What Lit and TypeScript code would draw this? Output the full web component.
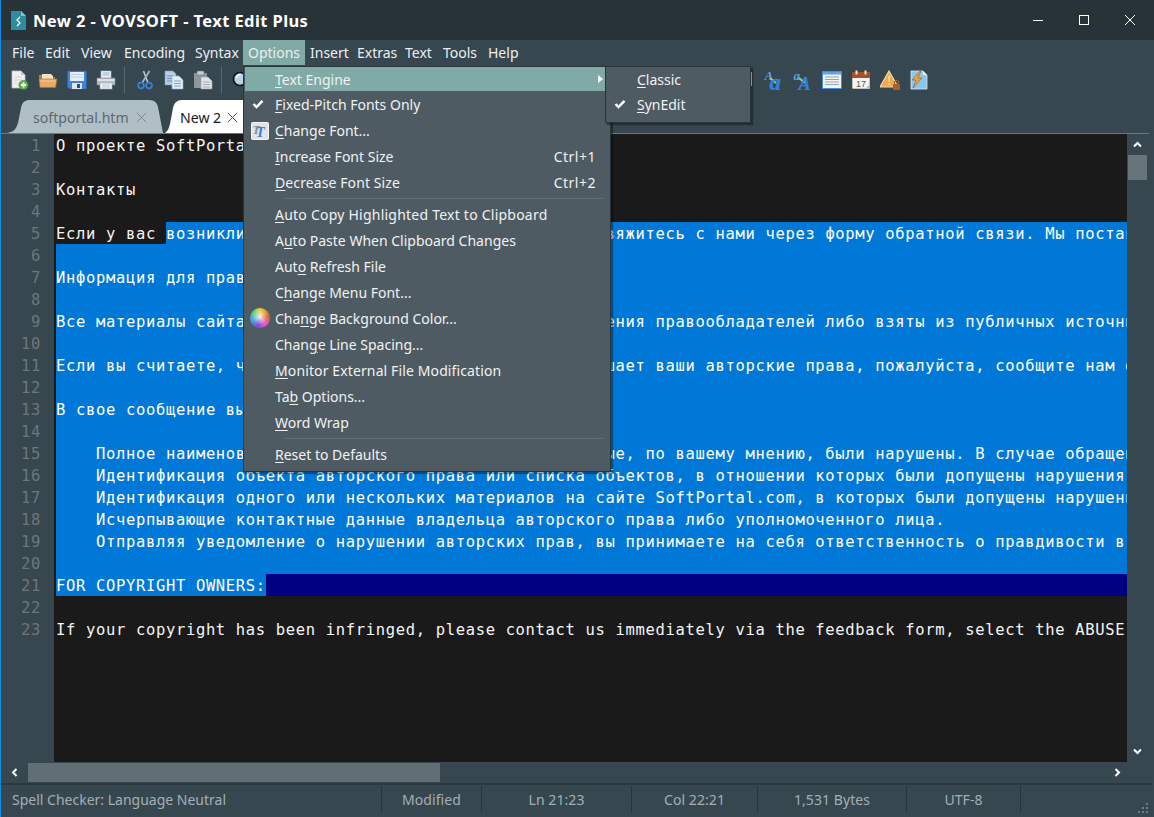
import { LitElement, html, css } from "lit";
import { customElement } from "lit/decorators.js";

type Seg = { t: string; sel?: boolean; fill?: boolean };
type Line = { segs?: Seg[]; t?: string; sel?: boolean; cur?: boolean };

const lines: Line[] = [
  { t: "О проекте SoftPortal" },
  { t: "" },
  { t: "Контакты" },
  { t: "" },
  { segs: [{ t: "Если у вас " }, { t: "возникли вопросы или пожелания, пожалуйста свяжитесь с нами через форму обратной связи. Мы поставим", sel: true, fill: true }] },
  { t: "", sel: true },
  { t: "Информация для правообладателей", sel: true },
  { t: "", sel: true },
  { t: "Все материалы сайта опубликованы на нём только с разрешения правообладателей либо взяты из публичных источников", sel: true },
  { t: "", sel: true },
  { t: "Если вы считаете, что какой-либо материал на сайте нарушает ваши авторские права, пожалуйста, сообщите нам об этом", sel: true },
  { t: "", sel: true },
  { t: "В свое сообщение вы должны включить следующие сведения:", sel: true },
  { t: "", sel: true },
  { t: "    Полное наименование объекта и авторских прав, которые, по вашему мнению, были нарушены. В случае обращения", sel: true },
  { t: "    Идентификация объекта авторского права или списка объектов, в отношении которых были допущены нарушения", sel: true },
  { t: "    Идентификация одного или нескольких материалов на сайте SoftPortal.com, в которых были допущены нарушения", sel: true },
  { t: "    Исчерпывающие контактные данные владельца авторского права либо уполномоченного лица.", sel: true },
  { t: "    Отправляя уведомление о нарушении авторских прав, вы принимаете на себя ответственность о правдивости в своём", sel: true },
  { t: "", sel: true },
  { segs: [{ t: "FOR COPYRIGHT OWNERS:", sel: true }], cur: true },
  { t: "" },
  { t: "If your copyright has been infringed, please contact us immediately via the feedback form, select the ABUSE category" },
];

type Row = { label?: string; key?: string; check?: boolean; icon?: string; sep?: boolean; hot?: boolean; arrow?: boolean; ls?: number };
const rows: Row[] = [
  { label: "&Text Engine", hot: true, arrow: true },
  { label: "&Fixed-Pitch Fonts Only", check: true },
  { label: "&Change Font...", icon: "font" },
  { label: "&Increase Font Size", key: "Ctrl+1" },
  { label: "&Decrease Font Size", key: "Ctrl+2", ls: 0.1 },
  { sep: true },
  { label: "&Auto Copy Highlighted Text to Clipboard", ls: 0.23 },
  { label: "A&uto Paste When Clipboard Changes" },
  { label: "Aut&o Refresh File" },
  { label: "C&hange Menu Font..." },
  { label: "Cha&nge Background Color...", icon: "color" },
  { label: "Chan&ge Line Spacing..." },
  { label: "&Monitor External File Modification", ls: 0.12 },
  { label: "Ta&b Options..." },
  { label: "&Word Wrap" },
  { sep: true },
  { label: "&Reset to Defaults" },
];
const subRows: Row[] = [{ label: "&Classic" }, { label: "&SynEdit", check: true }];

const menus: [string, number][] = [["File", 33], ["Edit", 36], ["View", 43], ["Encoding", 71], ["Syntax", 53], ["Options", 62], ["Insert", 47], ["Extras", 48], ["Text", 38], ["Tools", 45], ["Help", 41]];
const status = ["Modified", "Ln 21:23", "Col 22:21", "1,531 Bytes", "UTF-8"];

const mn = (s: string) => {
  const i = s.indexOf("&");
  return html`${s.slice(0, i)}<u>${s[i + 1]}</u>${s.slice(i + 2)}`;
};

const check = html`<svg class="check" width="12" height="10" viewBox="0 0 12 10"><path d="M1.5 5 L4.5 8 L10.5 1.8" fill="none" stroke="#fff" stroke-width="2.4"/></svg>`;

const iconNew = html`<svg class="ti" viewBox="0 0 20 20"><path d="M3 1h9l4 4v13H3z" fill="#eef0f1" stroke="#c4c8ca" stroke-width=".8"/><path d="M12 1v4h4z" fill="#bfc5c9"/><path d="M5 7h8M5 10h8M5 13h5" stroke="#d2d6d8"/><circle cx="14.5" cy="15" r="4.6" fill="#5cb54a" stroke="#3f8a32" stroke-width=".6"/><path d="M14.5 12.4v5.2M11.9 15h5.2" stroke="#fff" stroke-width="1.8"/></svg>`;
const iconOpen = html`<svg class="ti" viewBox="0 0 20 20"><path d="M1 5h6l2 2h8v3H1z" fill="#b9793a"/><path d="M4 4h9l2 2v3H4z" fill="#f3e1c3"/><path d="M1 9h18l-1.5 8.5H2z" fill="#e8a866" stroke="#a86f38" stroke-width=".6"/><path d="M2.5 11h15" stroke="#f5cb99"/></svg>`;
const iconSave = html`<svg class="ti" viewBox="0 0 20 20"><path d="M.5 1h19v18H3l-2.500-2z" fill="#3f84d6" stroke="#2a62ab" stroke-width=".6"/><rect x="3" y="2" width="14" height="9" fill="#e6eef6"/><path d="M4 4.500h12M4 7h12" stroke="#b9cde2"/><rect x="5" y="13" width="10" height="6" fill="#dfe6ee"/><rect x="10" y="14" width="3" height="4" fill="#33507a"/></svg>`;
const iconPrint = html`<svg class="ti" viewBox="0 0 20 20"><rect x="5" y="1" width="10" height="7" fill="#f2f5f7" stroke="#b3bbc0" stroke-width=".6"/><path d="M6.500 3h7M6.500 5h7" stroke="#7fb4de"/><path d="M1 8h18v7H1z" fill="#b7bec3" stroke="#84898e" stroke-width=".6"/><rect x="1.500" y="9" width="17" height="2" fill="#dde1e3"/><rect x="4" y="13" width="12" height="6" fill="#f4f6f7" stroke="#a7adb1" stroke-width=".6"/><path d="M6 15h8M6 17h8" stroke="#a9c8df"/></svg>`;
const iconCut = html`<svg class="ti" viewBox="0 0 20 20"><path d="M14.500 1 L7 13M8.500 1 L13 13" stroke="#c3ccd3" stroke-width="1.500" fill="none"/><path d="M14.500 1 L7.500 12" stroke="#8aa7c5" stroke-width="1"/><circle cx="6" cy="15.500" r="2.900" fill="none" stroke="#3a80d4" stroke-width="1.800"/><circle cx="14" cy="15.500" r="2.900" fill="none" stroke="#3a80d4" stroke-width="1.800"/></svg>`;
const iconCopy = html`<svg class="ti" viewBox="0 0 20 20"><path d="M1 1h8l3 3v11H1z" fill="#b6cde2" stroke="#7f9fbf" stroke-width=".6"/><path d="M3 6h6M3 8.500h6M3 11h6" stroke="#6f93b8"/><path d="M8 6h7l4 4v9H8z" fill="#e3edf6" stroke="#8fb0cf" stroke-width=".6"/><path d="M10 11h7M10 13.500h7M10 16h7" stroke="#7da2c6"/></svg>`;
const iconPaste = html`<svg class="ti" viewBox="0 0 20 20"><rect x="1" y="3" width="13" height="15" rx="1" fill="#8f979c"/><rect x="4" y="1" width="7" height="4" rx="1" fill="#c9cdd0" stroke="#6f767b" stroke-width=".6"/><path d="M8 7h7l4 4v8H8z" fill="#dfe3e6" stroke="#99a1a6" stroke-width=".6"/><path d="M10 12h7M10 14.500h7M10 17h7" stroke="#a7aeb3"/></svg>`;
const iconSearch = html`<svg class="ti" viewBox="0 0 20 20"><circle cx="8" cy="9" r="6.500" fill="#b9d4ea" stroke="#111" stroke-width="1.600"/><path d="M4.500 8a4 4 0 0 1 4-3.500" stroke="#fff" stroke-width="1.500" fill="none"/><path d="M13 14l5 5" stroke="#222" stroke-width="3"/></svg>`;
const iconPart = html`<svg class="ti" viewBox="0 0 20 20"><rect x="3" y="2" width="14" height="14" fill="#d9dde0"/><path d="M13 4h3v14h-3z" fill="#aeb5ba"/></svg>`;
const iconAa = (a: string, b: string, sa: number, sb: number) => html`<svg class="ti" viewBox="0 0 20 20"><text x="0.500" y="10" font-family="Liberation Serif, serif" font-style="italic" font-weight="700" font-size="${sa}" fill="#5a9fe8">${a}</text><path d="M6 8l6 5" stroke="#93d56f" stroke-width="1.800"/><text x="5.500" y="19.500" font-family="Liberation Serif, serif" font-style="italic" font-weight="700" font-size="${sb}" fill="#2f82e0" stroke="#2f82e0" stroke-width=".3">${b}</text></svg>`;
const iconTable = html`<svg class="ti" viewBox="0 0 20 20"><rect x=".5" y="1.500" width="19" height="17" fill="#f1f4f6" stroke="#3f8ee0"/><rect x="1" y="2" width="18" height="2.500" fill="#5ba5ec"/><path d="M3 7h14M3 9.500h14M3 12h14M3 14.500h14" stroke="#9aa3a9"/></svg>`;
const iconCal = html`<svg class="ti" viewBox="0 0 20 20"><rect x="1" y="2" width="18" height="17" rx="1" fill="#f2f3f4" stroke="#444" stroke-width=".6"/><rect x="1" y="2" width="18" height="6" fill="#a5502a"/><rect x="4.500" y="0.500" width="2" height="4" fill="#e8e8e8"/><rect x="13.500" y="0.500" width="2" height="4" fill="#e8e8e8"/><text x="5" y="17" font-family="Liberation Sans, sans-serif" font-size="9" fill="#555">17</text><path d="M14 19l5-5v5z" fill="#b9bdc0"/></svg>`;
const iconWarn = html`<svg class="ti" viewBox="0 0 20 20"><path d="M9 1 L18 17H0z" fill="#f2a94e" stroke="#f8d7a5" stroke-width="1.200"/><path d="M8.200 6h1.800l-.3 6H8.500zM8.300 13.500h1.500v1.600H8.300z" fill="#fbe4c2"/><rect x="13" y="14" width="7" height="6" rx="1" fill="#a8602a"/><path d="M14.500 14v-1.500a2 2 0 0 1 4 0V14" fill="none" stroke="#a8602a" stroke-width="1.200"/></svg>`;
const iconFlash = html`<svg class="ti" viewBox="0 0 20 20"><path d="M2 1h12l4 4v14H2z" fill="#8cc6ec" stroke="#dbe6ee" stroke-width=".8"/><path d="M14 1v4h4z" fill="#e6eef4"/><path d="M11 1 L3 10h4l-3 8 9-10H9l3-7z" fill="#f0a23c" stroke="#7a4a16" stroke-width=".5"/></svg>`;

const fontIcon = html`<svg class="mi" viewBox="0 0 18 18"><rect x=".5" y=".5" width="17" height="17" rx="1" fill="#e3e3e3" stroke="#f6f6f6"/><text x="1.500" y="12" font-family="Liberation Serif, serif" font-style="italic" font-weight="700" font-size="12" fill="#8a8f94">T</text><text x="5" y="15" font-family="Liberation Serif, serif" font-style="italic" font-weight="700" font-size="14" fill="#2f7fd6">T</text></svg>`;

const close = (c: string) => html`<svg class="x" viewBox="0 0 11 11"><path d="M.8 .8l9.400 9.400M10.200 .8L.8 10.200" stroke="${c}" stroke-width="1" fill="none"/></svg>`;

@customElement("app-root")
export class AppRoot extends LitElement {
  static styles = css`
    :host { display: block; width: 1154px; height: 817px; overflow: hidden; position: relative; background: #37474f; font-family: "Noto Sans", sans-serif; box-sizing: border-box; border-left: 1px solid #0d8fe6; }
    .title { height: 40px; background: #283339; display: flex; align-items: center; color: #fff; }
    .logo { width: 15px; height: 19px; margin-left: 10px; margin-right: 7px; flex: none; }
    .ttext { font-weight: 700; font-size: 16.5px; letter-spacing: 0.4px; flex: 1; white-space: pre; padding-top: 1px; }
    .wc { width: 46px; height: 40px; display: flex; align-items: center; justify-content: center; }
    .wc svg { width: 10px; height: 10px; }
    .wcs { display: flex; margin-right: 1px; }
    .menubar { height: 26px; display: flex; padding-left: 6px; font-size: 14px; color: #eceff1; align-items: stretch; }
    .mitem { padding-left: 5px; box-sizing: border-box; display: flex; align-items: center; height: 25px; flex: none; }
    .mitem.on { background: #7faaa5; }
    .toolbar { height: 34px; display: flex; gap: 9px; padding-left: 8px; align-items: flex-start; padding-top: 4px; box-sizing: border-box; }
    .ti { width: 20px; height: 20px; flex: none; }
    .tsep { width: 1px; height: 26px; margin: -3px 1px 0 -1px; background: #59676f; flex: none; }
    .tspace { width: 465px; flex: none; }
    .tabs { height: 34px; display: flex; box-sizing: border-box; padding-left: 6px; margin-right: 5px; border-bottom: 1px solid #5b7a94; align-items: flex-end; }
    .tab { height: 33px; display: flex; align-items: center; font-size: 14.1px; box-sizing: border-box; flex: none; padding-top: 2px; }
    .tab.a { width: 156px; padding-left: 26px; background: #b0bec5; color: #5c6870; clip-path: path("M0 33 C7 32 9 29 11 23 L14 8 C15 2 18 0 23 0 L142 0 C148 0 150 3 151 7 L156 33 Z"); }
    .tab.b { width: 96px; margin-left: 2px; padding-left: 15px; background: #fff; color: #15191c; clip-path: path("M0 33 C3 31 4 28 5 24 L8 8 C9 3 12 0 17 0 L96 0 L96 33 Z"); }
    .x { width: 11px; height: 11px; flex: none; }
    .tab.a .x { margin-left: 7px; }
    .tab.b .x { margin-left: 6px; }
    .main { height: 628px; display: flex; }
    .gutter { width: 53px; flex: none; padding-right: 13px; box-sizing: border-box; text-align: right; color: #6f7679; }
    .gutter div, .line { height: 22px; line-height: 24px; overflow: hidden; font-family: "DejaVu Sans Mono", monospace; font-size: 15.5px; letter-spacing: 0.66px; white-space: pre; }
    .code { width: 1073px; flex: none; background: #1a1a1a; padding-left: 2px; box-sizing: border-box; overflow: hidden; color: #f5f5f5; }
    .line { display: flex; }
    .line.sel, .seg.sel { background: #0078d7; color: #fff; }
    .line.cur { background: #000080; }
    .seg.fill { flex: 1; }
    .vs { width: 26px; flex: none; display: flex; flex-direction: column; align-items: flex-start; }
    .va { height: 21px; width: 20px; display: flex; align-items: center; justify-content: center; flex: none; }
    .vt { width: 19px; height: 25px; background: #677479; margin-left: 1px; flex: none; }
    .grow { flex: 1; }
    .hs { height: 21px; display: flex; align-items: stretch; border-bottom: 2px solid #2b3840; margin-right: 1px; }
    .ha { width: 27px; display: flex; align-items: center; justify-content: center; flex: none; }
    .ha.r { width: 50px; justify-content: flex-start; padding-left: 11px; box-sizing: border-box; }
    .ht { width: 412px; margin: 1px 0; background: #616e74; flex: none; }
    .status { height: 30px; display: flex; font-size: 14px; color: #a3afb5; padding-top: 1px; }
    .cell { display: flex; align-items: center; justify-content: center; box-sizing: border-box; border-right: 1px solid #27343b; height: 26px; flex: none; letter-spacing: 0.08px; }
    .cell.first { justify-content: flex-start; padding-left: 11px; width: 381px; letter-spacing: 0; }
    .grip { position: absolute; right: 5px; bottom: 3px; width: 11px; height: 11px; }
    .menu { position: absolute; background: #4f5b62; border: 1px solid #2a353b; box-shadow: 2px 2px 1px rgba(0,0,0,.35); color: #f0f2f3; font-size: 14px; box-sizing: border-box; }
    .pop1 { left: 242px; top: 66px; width: 368px; height: 406px; padding: 0 0 3px 1px; }
    .pop2 { left: 604px; top: 66px; width: 146px; height: 57px; }
    .row { height: 26px; display: flex; align-items: center; position: relative; padding-left: 30px; white-space: pre; }
    .row:first-child { height: 24px; }
    .row.hot { background: #7faaa5; }
    .row u { text-underline-offset: 2px; text-decoration-thickness: 1px; }
    .key { position: absolute; right: 14px; letter-spacing: 0.5px; }
    .arrow { position: absolute; right: 7px; top: 8px; width: 0; height: 0; border-left: 5px solid #fff; border-top: 4px solid transparent; border-bottom: 4px solid transparent; }
    .check { position: absolute; left: 7px; top: 8px; }
    .mi { position: absolute; left: 6px; top: 5px; width: 18px; height: 18px; }
    .wheel { position: absolute; left: 5px; top: 3px; width: 20px; height: 20px; border-radius: 50%; background: radial-gradient(circle at 50% 45%, rgba(255,255,255,.8), rgba(255,255,255,0) 55%), conic-gradient(#e9c63a, #d9622b 22%, #e95bd0 38%, #7a4fd0 55%, #3fa4e6 70%, #5dd07a 88%, #e9c63a); }
    .msep { height: 6px; display: flex; align-items: center; padding-left: 40px; padding-right: 7px; }
    .msep i { display: block; flex: 1; height: 1px; background: #626e75; }
    .pop2 .row { padding-left: 31px; }
    .pop2 .check { left: 8px; }
  `;

  private renderRow(r: Row) {
    if (r.sep) return html`<div class="msep"><i></i></div>`;
    return html`<div class="row ${r.hot ? "hot" : ""}">
      ${r.check ? check : ""}
      ${r.icon === "font" ? fontIcon : ""}
      ${r.icon === "color" ? html`<span class="wheel"></span>` : ""}
      <span style="letter-spacing:${r.ls ?? 0}px">${mn(r.label!)}</span>
      ${r.key ? html`<span class="key">${r.key}</span>` : ""}
      ${r.arrow ? html`<span class="arrow"></span>` : ""}
    </div>`;
  }

  private renderLine(l: Line) {
    if (l.segs) {
      return html`<div class="line ${l.cur ? "cur" : ""}">${l.segs.map(
        (s) => html`<span class="seg ${s.sel ? "sel" : ""} ${s.fill ? "fill" : ""}">${s.t}</span>`
      )}</div>`;
    }
    return html`<div class="line ${l.sel ? "sel" : ""}">${l.t}</div>`;
  }

  render() {
    const widths = [100, 150, 126, 149, 114];
    return html`
      <div class="title">
        <svg class="logo" viewBox="0 0 15 19"><path d="M0 0h10l5 5v14H0z" fill="#2a8ea0"/><path d="M10 0l5 5h-5z" fill="#7fc4cf"/><path d="M9 6L6 9l3 3-3 3" fill="none" stroke="#fff" stroke-width="1.300"/></svg>
        <div class="ttext">New 2 - VOVSOFT - Text Edit Plus</div>
        <div class="wcs">
          <div class="wc"><svg viewBox="0 0 10 10"><path d="M0 5.500h10" stroke="#fff"/></svg></div>
          <div class="wc"><svg viewBox="0 0 10 10"><rect x=".5" y=".5" width="9" height="9" fill="none" stroke="#fff"/></svg></div>
          <div class="wc"><svg viewBox="0 0 10 10"><path d="M0 0l10 10M10 0L0 10" stroke="#fff"/></svg></div>
        </div>
      </div>
      <div class="menubar">${menus.map(([m, w]) => html`<div class="mitem ${m === "Options" ? "on" : ""}" style="width:${w}px">${m}</div>`)}</div>
      <div class="toolbar">
        ${iconNew}${iconOpen}${iconSave}${iconPrint}<span class="tsep"></span>
        ${iconCut}${iconCopy}${iconPaste}<span class="tsep"></span>
        ${iconSearch}<span class="tspace"></span>
        ${iconPart}${iconAa("A", "a", 13, 23)}${iconAa("a", "A", 13, 18)}${iconTable}${iconCal}${iconWarn}${iconFlash}
      </div>
      <div class="tabs">
        <div class="tab a">softportal.htm${close("#7d8a91")}</div>
        <div class="tab b">New 2${close("#555")}</div>
      </div>
      <div class="main">
        <div class="gutter">${lines.map((_, i) => html`<div>${i + 1}</div>`)}</div>
        <div class="code">${lines.map((l) => this.renderLine(l))}</div>
        <div class="vs">
          <div class="va"><svg width="9" height="7" viewBox="0 0 9 7"><path d="M1 5.500l3.500-3.500 3.500 3.500" fill="none" stroke="#fff" stroke-width="2"/></svg></div>
          <div class="vt"></div>
          <div class="grow"></div>
          <div class="va"><svg width="9" height="7" viewBox="0 0 9 7"><path d="M1 1.500l3.500 3.500 3.500-3.500" fill="none" stroke="#fff" stroke-width="2"/></svg></div>
        </div>
      </div>
      <div class="hs">
        <div class="ha"><svg width="7" height="9" viewBox="0 0 7 9"><path d="M5.500 1L2 4.500 5.500 8" fill="none" stroke="#fff" stroke-width="2"/></svg></div>
        <div class="ht"></div>
        <div class="grow"></div>
        <div class="ha r"><svg width="7" height="9" viewBox="0 0 7 9"><path d="M1.500 1L5 4.500 1.500 8" fill="none" stroke="#fff" stroke-width="2"/></svg></div>
      </div>
      <div class="status">
        <div class="cell first">Spell Checker: Language Neutral</div>
        ${status.map((s, i) => html`<div class="cell" style="width:${widths[i]}px">${s}</div>`)}
      </div>
      <svg class="grip" viewBox="0 0 11 11" fill="#6f7c83"><rect x="8" y="0" width="2" height="2"/><rect x="4" y="4" width="2" height="2"/><rect x="8" y="4" width="2" height="2"/><rect x="0" y="8" width="2" height="2"/><rect x="4" y="8" width="2" height="2"/><rect x="8" y="8" width="2" height="2"/></svg>
      <div class="menu pop1">${rows.map((r) => this.renderRow(r))}</div>
      <div class="menu pop2">${subRows.map((r) => this.renderRow(r))}</div>
    `;
  }
}
